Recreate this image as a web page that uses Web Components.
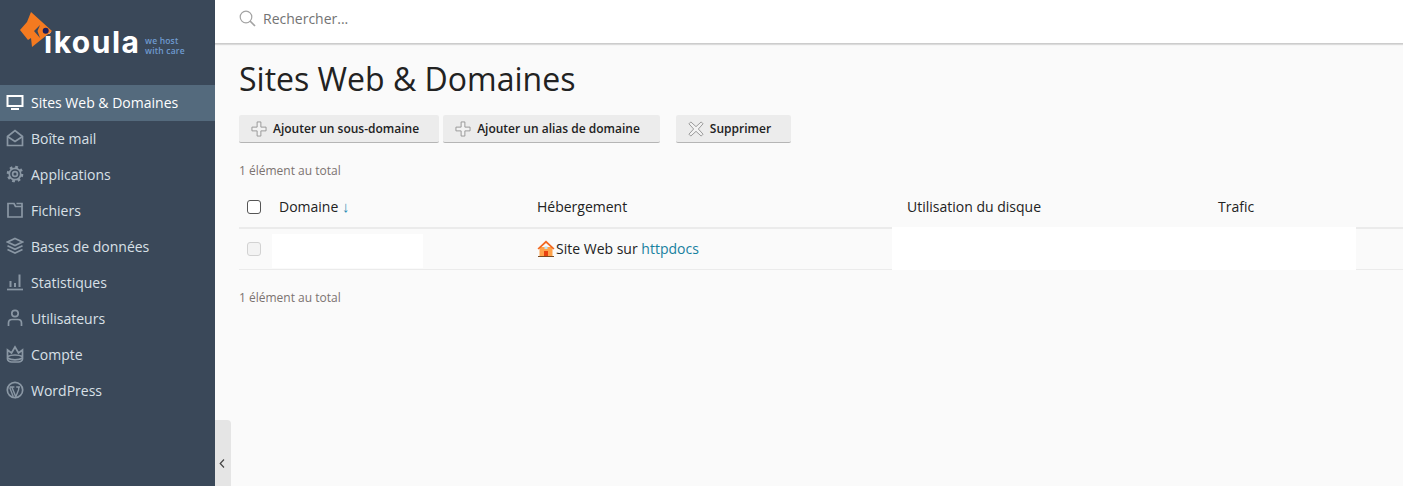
<!DOCTYPE html>
<html lang="fr">
<head>
<meta charset="utf-8">
<title>Sites Web &amp; Domaines</title>
<style>
  html, body { margin: 0; height: 100%; overflow: hidden; }
  body { font-family: "Open Sans", "Liberation Sans", sans-serif; }
</style>
</head>
<body>
<ik-app>
  <ik-sidebar slot="side">
    <ik-nav-item icon="monitor" active>Sites Web &amp; Domaines</ik-nav-item>
    <ik-nav-item icon="mail">Boîte mail</ik-nav-item>
    <ik-nav-item icon="gear">Applications</ik-nav-item>
    <ik-nav-item icon="folder">Fichiers</ik-nav-item>
    <ik-nav-item icon="db">Bases de données</ik-nav-item>
    <ik-nav-item icon="chart">Statistiques</ik-nav-item>
    <ik-nav-item icon="user">Utilisateurs</ik-nav-item>
    <ik-nav-item icon="crown">Compte</ik-nav-item>
    <ik-nav-item icon="wp">WordPress</ik-nav-item>
  </ik-sidebar>
  <ik-search slot="top"></ik-search>
  <ik-toolbar>
    <ik-button icon="plus">Ajouter un sous-domaine</ik-button>
    <ik-button icon="plus">Ajouter un alias de domaine</ik-button>
    <ik-button icon="cross" class="sep">Supprimer</ik-button>
  </ik-toolbar>
  <ik-domain-table></ik-domain-table>
</ik-app>

<script>
const ICONS = {
  monitor: '<path d="M1.5 3h15v10h-15z" stroke-width="2"/><path d="M5 16h8" stroke-width="2"/>',
  mail: '<path d="M1.5 7.5 9 1.500l7.500 6V16.500h-15z"/><path d="M1.500 7.500 9 12.500l7.500-5"/>',
  gear: '<circle cx="9" cy="9" r="2.400"/><circle cx="9" cy="9" r="5.700"/><circle cx="9" cy="9" r="7" stroke-width="2.600" stroke-dasharray="2.700 2.800"/>',
  folder: '<path d="M2 2.500v13.500h14V5.500H9.500L8 2.500z"/><path d="M10.500 2.500H16v3"/>',
  db: '<path d="M9 1.500 16.500 5 9 8.500 1.500 5z"/><path d="M1.500 8.800 9 12.300l7.500-3.500"/><path d="M1.500 12.500 9 16l7.500-3.500"/>',
  chart: '<path d="M1 16.500h16"/><path d="M4.500 8v6" stroke-width="2"/><path d="M9 10v4" stroke-width="2"/><path d="M13.500 1.500V14" stroke-width="2"/>',
  user: '<circle cx="9" cy="4.500" r="3.200"/><path d="M2.500 17v-3c0-2 1.500-3.500 3.500-3.500h6c2 0 3.500 1.500 3.500 3.500v3"/>',
  crown: '<path d="M1.500 5 5.500 8 9 2l3.500 6 4-3v9c0 1.500-2 3-4 3h-7c-2 0-4-1.500-4-3z"/><path d="M1.500 11.500c4-2 11-2 15 0"/><path d="M1.500 13c4 2.500 11 2.500 15 0"/>',
  wp: '<circle cx="9" cy="9" r="7.700"/><path d="M3.700 6.500 7.300 15.800M6 6.500 9.800 15.800l2.800-7c.6-1.500-.2-2.300-.5-2.800M3.800 6h4.600M10.200 6h3.800" stroke-width="1.400"/>'
};

const appTemplate = document.createElement("template");
appTemplate.innerHTML = `
  <style>
    :host {
      display: grid;
      grid-template-columns: 215px 1fr;
      height: 486px;
      background: #fafafa;
      color: #222;
      font-family: "Open Sans", "Liberation Sans", sans-serif;
    }
    .main { display: flex; flex-direction: column; min-width: 0; position: relative; }
    .page { padding: 0 0 0 24px; }
    h1 {
      margin: 0;
      padding-top: 15px;
      font-size: 32px;
      line-height: 40px;
      font-weight: 400;
      color: #222;
      height: 56px;
    }
    .handle {
      position: absolute;
      left: 0;
      top: 420px;
      bottom: 0;
      width: 16px;
      background: #e5e5e5;
      border-top-right-radius: 4px;
      display: flex;
      align-items: flex-end;
      justify-content: center;
    }
    .handle svg { margin: 0 2px 18px 0; }
  </style>
  <slot name="side"></slot>
  <div class="main">
    <slot name="top"></slot>
    <div class="page">
      <h1>Sites Web &amp; Domaines</h1>
      <slot></slot>
    </div>
    <div class="handle">
      <svg width="6" height="9" viewBox="0 0 6 9" fill="none" stroke="#444" stroke-width="1.200"><path d="M5 .5 1.200 4.500 5 8.500"/></svg>
    </div>
  </div>
`;
class IkApp extends HTMLElement {
  constructor() {
    super();
    this.attachShadow({ mode: "open" }).appendChild(appTemplate.content.cloneNode(true));
  }
}

const sidebarTemplate = document.createElement("template");
sidebarTemplate.innerHTML = `
  <style>
    :host { display: block; background: #3a4859; height: 486px; }
    .logo { height: 85px; position: relative; }
    .fish { position: absolute; left: 19px; top: 11px; }
    .name {
      position: absolute;
      left: 44px;
      top: 20px;
      font: 700 30px/44px Inter, "Open Sans", sans-serif;
      color: #fff;
      letter-spacing: 1.500px;
    }
    .tag {
      position: absolute;
      left: 145px;
      top: 36px;
      font: 600 8.500px/10px "Open Sans", sans-serif;
      color: #6f9bd0;
      letter-spacing: .2px;
    }
  </style>
  <div class="logo">
    <span class="name">ikoula</span>
    <svg class="fish" width="35" height="40" viewBox="0 0 35 40">
      <path fill="#f47a20" d="M12 1 8 11 1 19 9 29 12 27 13 36 33 20Z"/>
      <path fill="#3a4859" d="M21 14 15 20 21 27 18.500 20Z"/>
      <circle cx="26.700" cy="19.700" r="3" fill="#1e1f5c"/>
    </svg>
    <span class="tag">we host<br>with care</span>
  </div>
  <slot></slot>
`;
class IkSidebar extends HTMLElement {
  constructor() {
    super();
    this.attachShadow({ mode: "open" }).appendChild(sidebarTemplate.content.cloneNode(true));
  }
}

class IkNavItem extends HTMLElement {
  constructor() {
    super();
    const name = this.getAttribute("icon");
    this.attachShadow({ mode: "open" }).innerHTML = `
      <style>
        :host {
          display: flex;
          align-items: center;
          height: 36px;
          box-sizing: border-box;
          padding: 0 0 2px 6px;
          gap: 7px;
          color: #d9e0e7;
          font-size: 14px;
          font-family: "Open Sans", "Liberation Sans", sans-serif;
        }
        :host([active]) { background: #546a7d; color: #fff; }
        svg { flex: none; stroke: #8a97a4; }
        :host([active]) svg { stroke: #fff; }
      </style>
      <svg width="18" height="18" viewBox="0 0 18 18" fill="none" stroke-width="1.700">${ICONS[name]}</svg>
      <slot></slot>
    `;
  }
}

const searchTemplate = document.createElement("template");
searchTemplate.innerHTML = `
  <style>
    :host {
      display: flex;
      align-items: center;
      gap: 7px;
      height: 44px;
      box-sizing: border-box;
      padding: 0 0 6px 24px;
      background: #fff;
      border-bottom: 1px solid #ccc;
      box-shadow: 0 1px 1px rgba(0,0,0,.12);
      color: #737373;
      font-size: 14px;
    }
  </style>
  <svg width="17" height="17" viewBox="0 0 17 17" fill="none" stroke="#a3a3a3" stroke-width="1.200">
    <circle cx="7" cy="7" r="5.800"/><path d="M11 11l5 5" stroke-width="1.700"/>
  </svg>
  <span>Rechercher...</span>
`;
class IkSearch extends HTMLElement {
  constructor() {
    super();
    this.attachShadow({ mode: "open" }).appendChild(searchTemplate.content.cloneNode(true));
  }
}

const toolbarTemplate = document.createElement("template");
toolbarTemplate.innerHTML = `
  <style>
    :host { display: flex; gap: 4px; height: 28px; }
    ::slotted(.sep) { margin-left: 12px; }
  </style>
  <slot></slot>
`;
class IkToolbar extends HTMLElement {
  constructor() {
    super();
    this.attachShadow({ mode: "open" }).appendChild(toolbarTemplate.content.cloneNode(true));
  }
}

const BTN_ICONS = {
  plus: '<path d="M6.500 1h4v5.500H16v4h-5.500V16h-4v-5.500H1v-4h5.500z"/>',
  cross: '<path d="M3 1l5.500 5 5.500-5 2 2-5 5.500 5 5.500-2 2-5.500-5-5.500 5-2-2 5-5.500-5-5.500z"/>'
};
class IkButton extends HTMLElement {
  constructor() {
    super();
    const icon = BTN_ICONS[this.getAttribute("icon")];
    this.attachShadow({ mode: "open" }).innerHTML = `
      <style>
        :host {
          display: inline-flex;
          align-items: center;
          gap: 6px;
          box-sizing: border-box;
          height: 28px;
          padding: 0 20px 0 12px;
          background: #ececec;
          border-bottom: 1px solid #b5b5b5;
          border-radius: 2px;
          font-size: 12px;
          font-weight: 600;
          color: #222;
          white-space: nowrap;
        }
        svg { flex: none; }
      </style>
      <svg width="16" height="16" viewBox="0 0 17 17" fill="#f2f2f2" stroke="#959595" stroke-width="1">${icon}</svg>
      <slot></slot>
    `;
  }
}

const tableTemplate = document.createElement("template");
tableTemplate.innerHTML = `
  <style>
    :host { display: block; color: #222; font-size: 14px; }
    .total { font-size: 12px; line-height: 15px; color: #7a7370; padding-top: 20px; }
    .row {
      display: grid;
      grid-template-columns: 40px 258px 370px 311px 1fr;
      align-items: center;
      position: relative;
    }
    .row > div:not(.box):not(.mask) { padding-bottom: 2px; }
    .head { height: 40px; margin-top: 9px; border-bottom: 2px solid #ebebeb; }
    .body { height: 40px; border-bottom: 1px solid #ebebeb; }
    .box {
      width: 14px;
      height: 14px;
      margin-left: 8px;
      border-radius: 3px;
      box-sizing: border-box;
    }
    .head .box { border: 1.500px solid #555; background: #fff; }
    .body .box { border: 1px solid #d2d2d2; background: #f3f3f3; }
    .arrow { color: #2b8cb3; font-size: 15px; font-weight: 700; line-height: 14px; }
    a { color: #17809f; text-decoration: none; }
    .site { display: flex; align-items: center; gap: 1px; }
    .mask { position: absolute; background: #fff; }
    .mask.dom { left: 33px; width: 151px; top: 5px; height: 34px; }
    .mask.disk { left: 653px; width: 464px; top: -2px; height: 43px; }
  </style>
  <div class="total">1 élément au total</div>
  <div class="row head">
    <div class="box"></div>
    <div>Domaine <span class="arrow">↓</span></div>
    <div>Hébergement</div>
    <div>Utilisation du disque</div>
    <div>Trafic</div>
  </div>
  <div class="row body">
    <div class="box"></div>
    <div></div>
    <div class="site">
      <svg width="18" height="17" viewBox="0 0 18 17">
        <path fill="#ffa24a" d="M2.500 7h13v9.500h-13z"/>
        <path fill="#f2661f" d="M9 .5 17.500 8.500l-1.200 1L9 3 1.700 9.500.5 8.500z"/>
        <path fill="#e8410f" d="M7 11h4v5.500H7z"/>
        <path fill="#bfe0f0" d="M7.500 6.500h3v2.500h-3z"/>
        <path fill="#7a4a20" d="M1 16h16v1H1z"/>
      </svg>
      <span>Site Web sur <a href="#">httpdocs</a></span>
    </div>
    <div></div>
    <div></div>
    <div class="mask dom"></div>
    <div class="mask disk"></div>
  </div>
  <div class="total">1 élément au total</div>
`;
class IkDomainTable extends HTMLElement {
  constructor() {
    super();
    this.attachShadow({ mode: "open" }).appendChild(tableTemplate.content.cloneNode(true));
  }
}

customElements.define("ik-app", IkApp);
customElements.define("ik-sidebar", IkSidebar);
customElements.define("ik-nav-item", IkNavItem);
customElements.define("ik-search", IkSearch);
customElements.define("ik-toolbar", IkToolbar);
customElements.define("ik-button", IkButton);
customElements.define("ik-domain-table", IkDomainTable);
</script>
</body>
</html>
